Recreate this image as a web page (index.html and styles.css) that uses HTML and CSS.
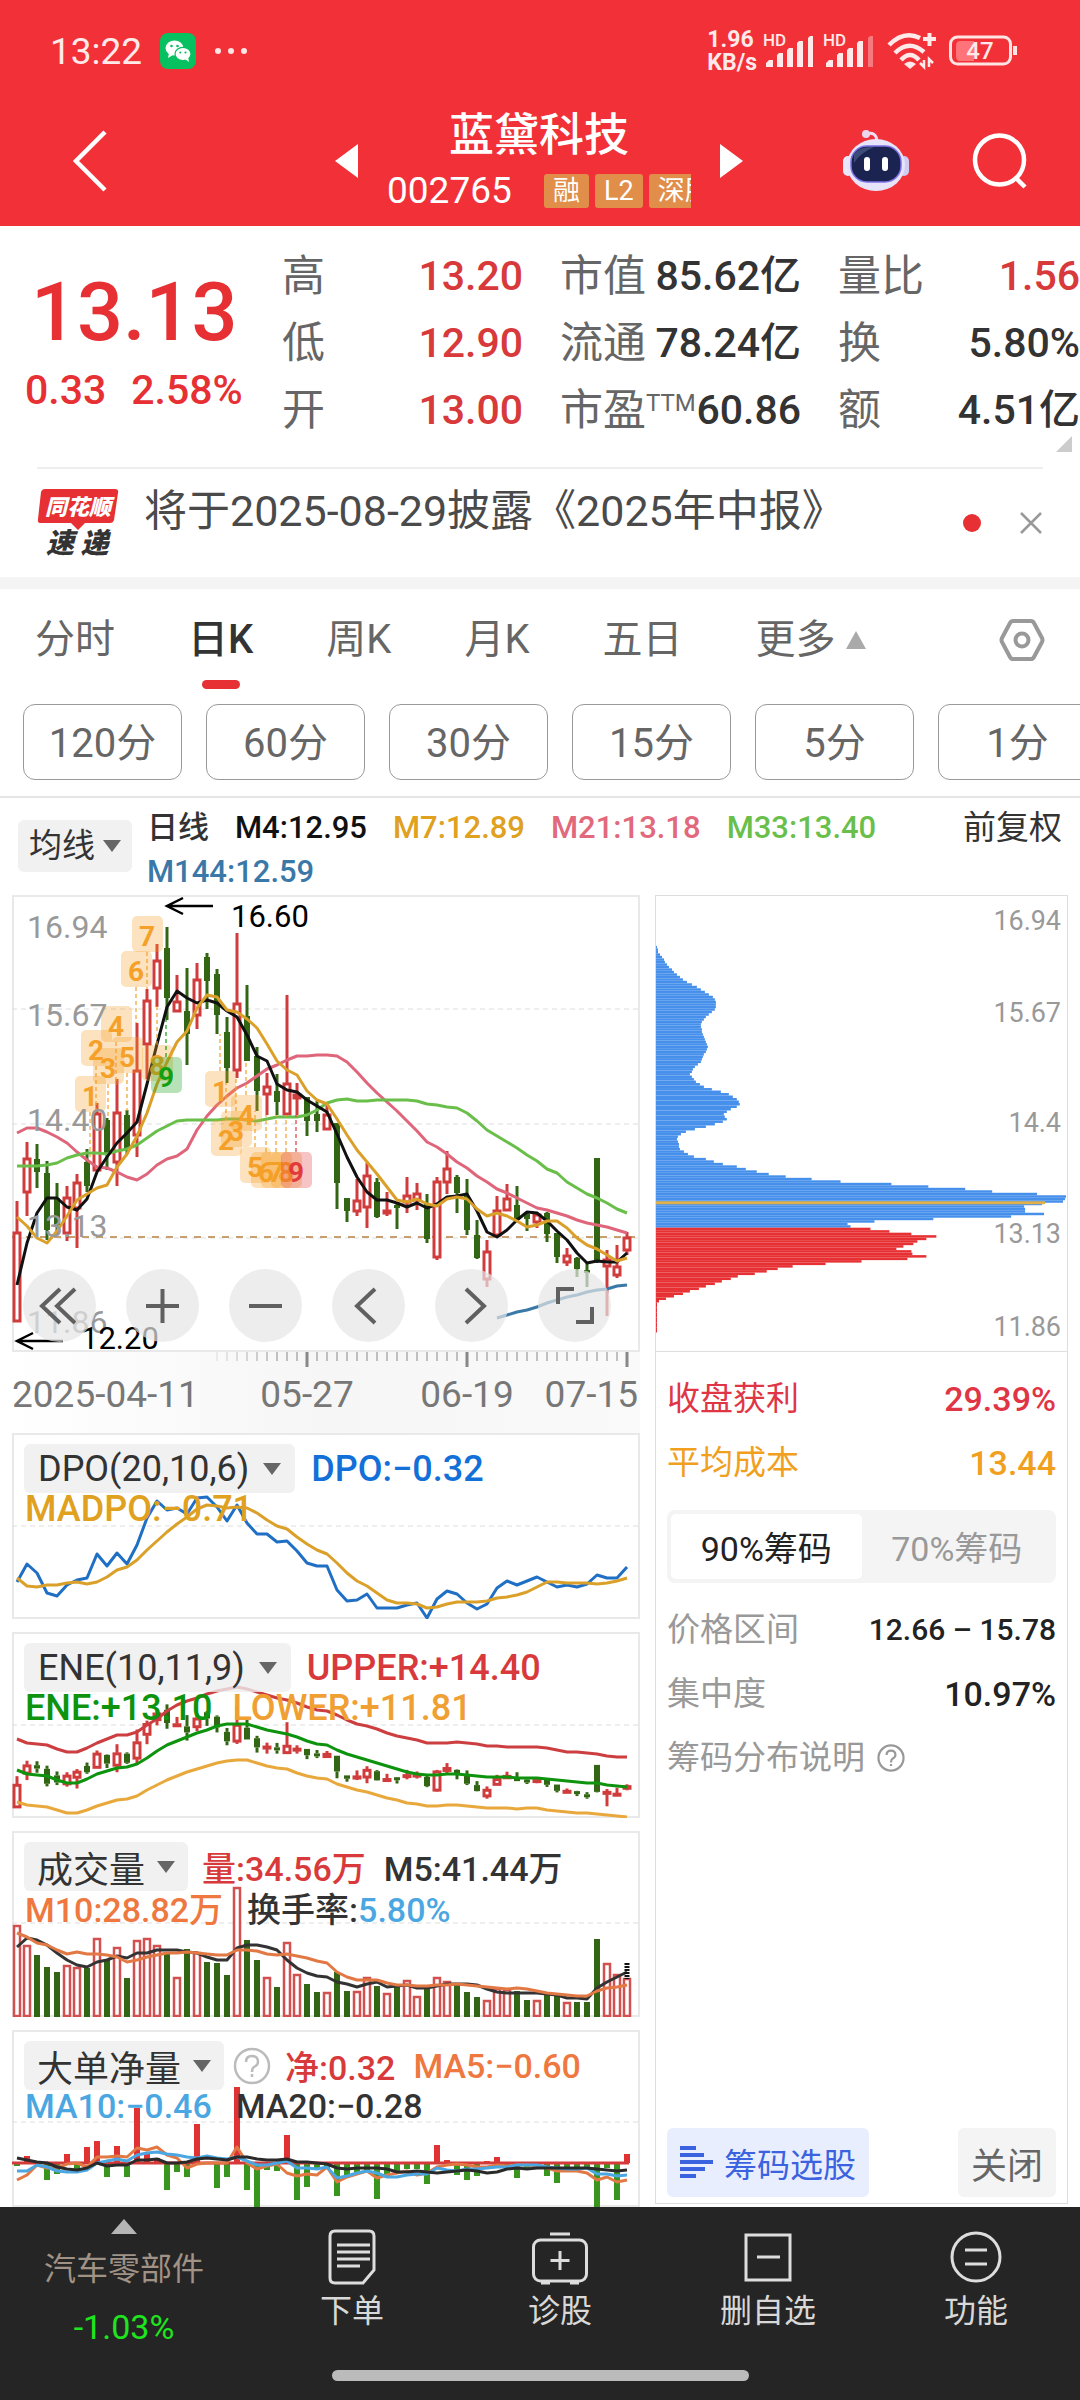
FILE: index.html
```html
<!DOCTYPE html>
<html lang="zh-CN">
<head>
    <meta charset="UTF-8">
    <meta name="viewport" content="width=device-width, initial-scale=1">
    <title>蓝黛科技 002765</title>
    <link rel="stylesheet" href="styles.css">
</head>
<body>
<header class="top">
    <div class="status">
        <span class="time">13:22</span>
        <svg class="wechat" width="36" height="36" viewBox="0 0 36 36">
            <rect width="36" height="36" rx="8" fill="#07c160"/>
            <ellipse cx="14.5" cy="15" rx="9" ry="7.5" fill="#fff"/>
            <path d="M9 20l-1 5 5-3z" fill="#fff"/>
            <ellipse cx="23" cy="21" rx="8" ry="6.6" fill="#fff" stroke="#07c160" stroke-width="1.2"/>
            <path d="M25 26l4 3-1-5z" fill="#fff"/>
            <g fill="#07c160"><circle cx="11.5" cy="13" r="1.3"/><circle cx="17.5" cy="13" r="1.3"/><circle cx="20.3" cy="19.5" r="1.1"/><circle cx="25.5" cy="19.5" r="1.1"/></g>
        </svg>
        <svg width="34" height="8" viewBox="0 0 34 8" fill="#ffe4e4"><circle cx="4" cy="4" r="3"/><circle cx="17" cy="4" r="3"/><circle cx="30" cy="4" r="3"/></svg>
        <div class="status-right">
            <span class="speed">1.96<br>KB/s</span>
            <svg width="112" height="36" viewBox="0 0 112 36" fill="#ffe9e9">
                <text x="0" y="13" class="hd">HD</text>
                <path d="M3 34v-4l3-3h4v7zM14 34V22l2-2h4v14zM24 34V17l2-2h4v19zM34 34V10l2-2h4v26zM45 34V5l2-2h3v31z"/>
                <text x="60" y="13" class="hd">HD</text>
                <path d="M63 34v-4l3-3h4v7zM74 34V22l2-2h4v14zM84 34V17l2-2h4v19zM94 34V10l2-2h4v26z"/>
                <path d="M105 34V5l2-2h3v31z" opacity=".4"/>
            </svg>
            <svg width="50" height="38" viewBox="0 0 50 38" fill="none" stroke="#ffe9e9" stroke-width="4.5">
                <path d="M2 13Q17 -2 33 6"/><path d="M8 21Q22 7 37 20"/><path d="M14 28Q23 18 32 28"/>
                <path d="M17 32l6 5 6-5q-6-5-12 0z" fill="#ffe9e9" stroke="none"/>
                <path d="M36 7h13M42.5 1v13" stroke-width="4"/>
                <path d="M37 28v7l-4-4M42 35v-8l4 4" stroke-width="2.5"/>
            </svg>
            <svg width="70" height="32" viewBox="0 0 70 32">
                <rect x="1.5" y="2" width="60" height="27" rx="7" fill="none" stroke="#ffe4e4" stroke-width="3"/>
                <path d="M11 6h14v20H11q-4 0-4-5V11q0-5 4-5z" fill="#ff7479"/>
                <path d="M66 11v9" stroke="#ffe4e4" stroke-width="4"/>
                <text x="31" y="24" class="battery">47</text>
            </svg>
        </div>
    </div>
    <div class="title-bar">
        <button class="icon-btn back" aria-label="返回"><svg width="36" height="62" viewBox="0 0 36 62" fill="none" stroke="#fff" stroke-width="4.5"><path d="M33 2L4 31l29 29"/></svg></button>
        <div class="stock-nav">
            <button class="icon-btn" aria-label="上一只"><svg width="24" height="34" viewBox="0 0 24 34"><path d="M24 0v34L1 17z" fill="#fff"/></svg></button>
            <div class="stock">
                <h1>蓝黛科技</h1>
                <div class="stock-code">
                    <span>002765</span>
                    <div class="tags"><b>融</b><b>L2</b><b>深股</b></div>
                </div>
            </div>
            <button class="icon-btn" aria-label="下一只"><svg width="24" height="34" viewBox="0 0 24 34"><path d="M0 0v34l23-17z" fill="#fff"/></svg></button>
        </div>
        <div class="tools">
            <button class="icon-btn" aria-label="助手">
                <svg width="68" height="64" viewBox="0 0 68 64">
                    <path d="M24 5q10-3 11 7" fill="none" stroke="#f4dff2" stroke-width="3"/>
                    <circle cx="24" cy="5" r="4" fill="#ecd6ee"/>
                    <rect x="1" y="27" width="10" height="20" rx="5" fill="#e9e8fb"/><rect x="57" y="27" width="10" height="20" rx="5" fill="#cfcdf5"/>
                    <ellipse cx="34" cy="36" rx="29" ry="26" fill="#e7e4fa"/>
                    <rect x="9" y="17" width="50" height="36" rx="16" fill="#1b2450" stroke="#7b6fe6" stroke-width="1.5"/>
                    <path d="M12 25q6-8 20-7-14 6-20 16z" fill="#3c4b78"/>
                    <rect x="22" y="28" width="6" height="14" rx="3" fill="#fff"/><rect x="40" y="28" width="6" height="14" rx="3" fill="#fff"/>
                </svg>
            </button>
            <button class="icon-btn" aria-label="搜索"><svg width="58" height="58" viewBox="0 0 58 58" fill="none" stroke="#fff" stroke-width="4.5"><circle cx="27.5" cy="28" r="24.5"/><path d="M44 46l9 9"/></svg></button>
        </div>
    </div>
</header>

<section class="quote">
    <div class="price">
        <strong>13.13</strong>
        <div><span>0.33</span><span>2.58%</span></div>
    </div>
    <dl class="stats">
        <div><dt>高</dt><dd class="up">13.20</dd></div>
        <div><dt>低</dt><dd class="up">12.90</dd></div>
        <div><dt>开</dt><dd class="up">13.00</dd></div>
    </dl>
    <dl class="stats">
        <div><dt>市值</dt><dd>85.62亿</dd></div>
        <div><dt>流通</dt><dd>78.24亿</dd></div>
        <div><dt>市盈<sup>TTM</sup></dt><dd>60.86</dd></div>
    </dl>
    <dl class="stats">
        <div><dt>量比</dt><dd class="up">1.56</dd></div>
        <div><dt>换</dt><dd>5.80%</dd></div>
        <div><dt>额</dt><dd>4.51亿</dd></div>
    </dl>
    <i class="corner"></i>
</section>

<section class="news">
    <svg class="news-logo" width="84" height="70" viewBox="0 0 84 70">
        <path d="M8 1h70q4 0 3 4l-4 27q-1 3-4 3H48l-7 7-7-7H4q-4 0-3-4L4 4q1-3 4-3z" fill="#e63033"/>
        <text x="8" y="27" class="logo-red">同花顺</text>
        <text x="9" y="65" class="logo-dark">速 递</text>
    </svg>
    <a href="#" class="news-text">将于2025-08-29披露《2025年中报》</a>
    <i class="dot"></i>
    <button class="icon-btn" aria-label="关闭公告"><svg width="24" height="24" viewBox="0 0 24 24" stroke="#999" stroke-width="2.5"><path d="M2 2l20 20M22 2L2 22"/></svg></button>
</section>

<nav class="tabs">
    <button>分时</button>
    <button class="active">日K</button>
    <button>周K</button>
    <button>月K</button>
    <button>五日</button>
    <button class="more">更多<svg width="20" height="18" viewBox="0 0 20 18"><path d="M10 0l10 18H0z" fill="#aaa"/></svg></button>
    <button class="setting" aria-label="设置"><svg width="46" height="44" viewBox="0 0 46 44" fill="none" stroke="#999" stroke-width="4"><path d="M14 3h18q2 0 3 2l8 15q1 2 0 4l-8 15q-1 2-3 2H14q-2 0-3-2L3 24q-1-2 0-4l8-15q1-2 3-2z"/><circle cx="23" cy="22" r="6.5"/></svg></button>
</nav>
<div class="periods">
    <button>120分</button>
    <button>60分</button>
    <button>30分</button>
    <button>15分</button>
    <button>5分</button>
    <button>1分</button>
</div>

<section class="legend">
    <button class="pick small">均线<i></i></button>
    <div class="legend-items">
        <span>日线</span>
        <span class="m4">M4:12.95</span>
        <span class="m7">M7:12.89</span>
        <span class="m21">M21:13.18</span>
        <span class="m33">M33:13.40</span>
        <span class="m144">M144:12.59</span>
    </div>
    <span class="adjust">前复权</span>
</section>

<main class="charts">
    <div class="left">
        <div class="panel">
            <svg id="kline" viewBox="0 0 628 457"></svg>
            <div class="controls">
                <button aria-label="最早"><svg viewBox="0 0 73 73"><path d="M37 20L19 37l18 17M52 20L34 37l18 17"/></svg></button>
                <button aria-label="放大"><svg viewBox="0 0 73 73"><path d="M20 37h33M36.5 20v34"/></svg></button>
                <button aria-label="缩小"><svg viewBox="0 0 73 73"><path d="M20 37h33"/></svg></button>
                <button aria-label="左移"><svg viewBox="0 0 73 73"><path d="M43 20L25 37l18 17"/></svg></button>
                <button aria-label="右移"><svg viewBox="0 0 73 73"><path d="M31 20l18 17-18 17"/></svg></button>
                <button aria-label="全屏"><svg viewBox="0 0 73 73"><path d="M20 35V20h16M54 38v15H38"/></svg></button>
            </div>
        </div>
        <svg id="ruler" viewBox="0 0 628 81"></svg>
        <div class="panel sub">
            <svg id="dpo" viewBox="0 0 628 186"></svg>
            <div class="sub-head">
                <div><button class="pick">DPO(20,10,6)<i></i></button><span class="blue">DPO:−0.32</span></div>
                <div><span class="gold">MADPO:−0.71</span></div>
            </div>
        </div>
        <div class="panel sub">
            <svg id="ene" viewBox="0 0 628 186"></svg>
            <div class="sub-head">
                <div><button class="pick">ENE(10,11,9)<i></i></button><span class="up">UPPER:+14.40</span></div>
                <div><span class="green">ENE:+13.10</span><span class="amber">LOWER:+11.81</span></div>
            </div>
        </div>
        <div class="panel sub">
            <svg id="volume" viewBox="0 0 628 186"></svg>
            <div class="sub-head compact">
                <div><button class="pick">成交量<i></i></button><span class="up">量:34.56万</span><span>M5:41.44万</span></div>
                <div><span class="orange">M10:28.82万</span><span>换手率:<em>5.80%</em></span></div>
            </div>
        </div>
        <div class="panel sub last">
            <svg id="net" viewBox="0 0 628 177"></svg>
            <div class="sub-head compact">
                <div><button class="pick">大单净量<i></i></button><svg class="help" viewBox="0 0 38 38"><circle cx="19" cy="19" r="17"/><path d="M13 15q0-6 6-6t6 6q0 3-4 5-2 1-2 5M19 27v3"/></svg><span class="up">净:0.32</span><span class="orange">MA5:−0.60</span></div>
                <div><span class="sky">MA10:−0.46</span><span>MA20:−0.28</span></div>
            </div>
        </div>
    </div>

    <aside class="chips">
        <svg id="chips" viewBox="0 0 412 457"></svg>
        <dl class="chip-info">
            <div class="profit"><dt>收盘获利</dt><dd>29.39%</dd></div>
            <div class="cost"><dt>平均成本</dt><dd>13.44</dd></div>
        </dl>
        <div class="toggle">
            <button class="on">90%筹码</button>
            <button>70%筹码</button>
        </div>
        <dl class="chip-info">
            <div><dt>价格区间</dt><dd class="range">12.66 – 15.78</dd></div>
            <div><dt>集中度</dt><dd>10.97%</dd></div>
            <div><dt>筹码分布说明<svg class="help" viewBox="0 0 38 38"><circle cx="19" cy="19" r="17"/><path d="M13 15q0-6 6-6t6 6q0 3-4 5-2 1-2 5M19 27v3"/></svg></dt></div>
        </dl>
        <div class="chip-actions">
            <button class="select"><svg width="34" height="34" viewBox="0 0 34 34" fill="#3b63e0"><path d="M0 0h16v4H0zM0 7h24v4H0zM0 14h33v4H0zM0 21h25v4H0zM0 28h16v4H0z"/></svg>筹码选股</button>
            <button class="close">关闭</button>
        </div>
    </aside>
</main>

<footer class="bottom">
    <div class="bottom-nav">
        <a href="#" class="sector">
            <svg width="26" height="15" viewBox="0 0 26 15"><path d="M13 0l13 15H0z" fill="#b5b5b5"/></svg>
            <span>汽车零部件</span>
            <b>-1.03%</b>
        </a>
        <button>
            <svg width="56" height="56" viewBox="0 0 56 56"><path d="M11 2h34q5 0 5 5v34L39 54H11q-5 0-5-5V7q0-5 5-5z"/><path d="M13 16h33M13 23h33M13 30h33M13 37h23"/></svg>
            下单
        </button>
        <button>
            <svg width="56" height="56" viewBox="0 0 56 56"><rect x="1.5" y="11" width="53" height="41" rx="7"/><path d="M18 5h20M28 22v19M18.5 31.5h19M9 54h9M38 54h9"/></svg>
            诊股
        </button>
        <button>
            <svg width="56" height="56" viewBox="0 0 56 56"><path d="M6 6h44v45H6zM17 28h23"/></svg>
            删自选
        </button>
        <button>
            <svg width="56" height="56" viewBox="0 0 56 56"><circle cx="28" cy="28" r="24"/><path d="M17 21h22M17 35h22"/></svg>
            功能
        </button>
    </div>
    <div class="home-bar"></div>
</footer>
<script src="script.js"></script>
</body>
</html>
```
FILE: styles.css
```css
* {
    box-sizing: border-box;
}
body {
    display: flex;
    flex-direction: column;
    min-height: 100vh;
    margin: 0;
    overflow-x: hidden;
    background-color: #fff;
    color: #333;
    font-family: Roboto, "Noto Sans CJK SC", sans-serif;
    font-size: 36px;
}
button {
    margin: 0;
    padding: 0;
    border: none;
    background: none;
    color: inherit;
    font: inherit;
    cursor: pointer;
}
a {
    color: inherit;
    text-decoration: none;
}
svg {
    display: block;
    flex: none;
}
dl, dd, h1 {
    margin: 0;
}

/* header */
.top {
    height: 226px;
    background-color: #f13038;
    color: #fff;
}
.status {
    display: flex;
    align-items: center;
    gap: 18px;
    height: 102px;
    padding: 0 61px 0 50px;
}
.time {
    color: #ffe9e9;
    font-size: 37px;
}
.status-right {
    display: flex;
    align-items: center;
    gap: 12px;
    margin-left: auto;
}
.speed {
    color: #ffe9e9;
    font-size: 23px;
    font-weight: 700;
    line-height: 23px;
    margin-right: -6px;
}
.hd {
    font-size: 17px;
    font-weight: 500;
}
.battery {
    fill: #ffe9e9;
    font-size: 24px;
    font-weight: 500;
    text-anchor: middle;
}
.title-bar {
    display: grid;
    grid-template-columns: 1fr 410px 1fr;
    align-items: center;
    height: 114px;
    padding: 0 50px 0 72px;
}
.icon-btn {
    display: flex;
}
.stock-nav {
    display: flex;
    align-items: center;
    justify-content: space-between;
    margin: 0 12px 0 -12px;
}
.stock {
    width: 304px;
    text-align: center;
}
.stock h1 {
    font-family: "Noto Sans CJK SC", sans-serif;
    font-size: 45px;
    font-weight: 500;
    line-height: 60px;
}
.stock-code {
    display: flex;
    align-items: center;
    justify-content: space-between;
    font-size: 37px;
    line-height: 58px;
}
.tags {
    display: flex;
    gap: 6px;
    width: 147px;
    overflow: hidden;
}
.tags b {
    flex: none;
    padding: 0 9px;
    border-radius: 3px;
    background-color: #e08e4a;
    font-size: 27px;
    font-weight: 400;
    line-height: 34px;
}
.tools {
    display: flex;
    align-items: center;
    justify-content: flex-end;
    gap: 62px;
}

/* quote */
.quote {
    position: relative;
    display: grid;
    grid-template-columns: 220px 241px 241px 1fr;
    column-gap: 37px;
    height: 241px;
    padding: 17px 0 0 25px;
    line-height: 67px;
}
.price {
    padding-top: 15px;
    color: #e63033;
    font-weight: 500;
    white-space: nowrap;
}
.price strong {
    display: block;
    padding-left: 6px;
    font-size: 81px;
    font-weight: 500;
    line-height: 110px;
}
.price div {
    display: flex;
    gap: 25px;
    font-size: 41px;
    line-height: 44px;
}
.stats div {
    display: flex;
    justify-content: space-between;
    white-space: nowrap;
}
.stats dt {
    color: #666;
    font-size: 43px;
}
.stats dd {
    font-size: 41px;
    font-weight: 500;
}
.stats sup {
    font-size: 24px;
    line-height: 0;
    vertical-align: 14px;
}
.up {
    color: #d8393b;
}
.corner {
    position: absolute;
    right: 8px;
    bottom: 15px;
    border: 8px solid transparent;
    border-right-color: #ccc;
    border-bottom-color: #ccc;
}

/* announcement */
.news {
    display: flex;
    align-items: center;
    height: 110px;
    margin: 0 37px;
    border-top: 2px solid #eee;
}
.logo-red, .logo-dark {
    font-family: "Noto Sans CJK SC", sans-serif;
    font-style: italic;
    font-weight: 900;
}
.logo-red {
    fill: #fff;
    font-size: 22px;
}
.logo-dark {
    fill: #333;
    font-size: 28px;
}
.news-text {
    flex: 1;
    padding: 0 0 24px 23px;
    color: #4a4a4a;
    font-size: 43px;
    line-height: 48px;
}
.dot {
    width: 18px;
    height: 18px;
    margin-right: 38px;
    border-radius: 50%;
    background-color: #e63033;
}

/* tabs */
.tabs {
    display: flex;
    align-items: center;
    height: 113px;
    padding: 0 35px;
    border-top: 12px solid #f4f4f4;
    color: #666;
    font-size: 40px;
    gap: 73px;
}
.tabs button {
    position: relative;
    line-height: 60px;
}
.tabs .active {
    color: #333;
    font-weight: 500;
}
.tabs .active::after {
    content: "";
    position: absolute;
    left: 50%;
    bottom: -19px;
    width: 38px;
    height: 9px;
    margin-left: -19px;
    border-radius: 5px;
    background-color: #e63033;
}
.tabs .more {
    display: flex;
    align-items: center;
    gap: 10px;
}
.tabs .setting {
    margin-left: auto;
}
.periods {
    display: flex;
    gap: 24px;
    height: 108px;
    padding: 14px 0 18px 23px;
    overflow: hidden;
    border-bottom: 2px solid #e6e6e6;
}
.periods button {
    flex: none;
    width: 159px;
    height: 76px;
    padding-bottom: 4px;
    border: 1px solid #999;
    border-radius: 12px;
    color: #666;
    font-size: 40px;
}

/* moving average legend */
.legend {
    display: flex;
    height: 97px;
    padding: 9px 18px 0;
    font-size: 32px;
    line-height: 42px;
}
.pick {
    display: flex;
    align-items: center;
    gap: 14px;
    height: 49px;
    padding: 0 14px;
    border-radius: 6px;
    background-color: rgba(238, 238, 238, 0.8);
    color: #333;
}
.pick i {
    border: 9px solid transparent;
    border-top: 12px solid #666;
    border-bottom: none;
}
.pick.small {
    gap: 8px;
    height: 52px;
    margin-top: 13px;
    padding: 0 11px;
    font-size: 33px;
}
.legend-items {
    display: flex;
    flex: 1;
    flex-wrap: wrap;
    column-gap: 26px;
    margin-left: 15px;
    font-size: 31px;
    font-weight: 500;
}
.m4 { color: #111; }
.m7 { color: #e0a020; }
.m21 { color: #e2687c; }
.m33 { color: #6abf4b; }
.m144 { color: #3a78a8; }
.adjust {
    font-size: 33px;
}

/* charts */
.charts {
    display: grid;
    grid-template-columns: 628fr 413fr;
    column-gap: 15px;
    flex: 1;
    padding: 0 12px;
}
.charts > * {
    min-width: 0;
}
.left > svg, .panel > svg, #chips {
    width: 100%;
    height: auto;
}
.panel {
    position: relative;
    box-shadow: inset 0 0 0 2px #e9e9e9;
}
.sub {
    margin-bottom: 13px;
}
.last {
    margin-bottom: 0;
}
.controls {
    position: absolute;
    left: 11px;
    bottom: 10px;
    display: flex;
    gap: 30px;
}
.controls button {
    width: 73px;
    height: 73px;
    border-radius: 50%;
    background-color: rgba(230, 230, 230, 0.7);
}
.controls path {
    fill: none;
    stroke: #606060;
    stroke-width: 4;
}
.sub-head {
    position: absolute;
    top: 11px;
    left: 12px;
    white-space: nowrap;
}
.sub-head div {
    display: flex;
    align-items: center;
    gap: 16px;
    height: 49px;
    font-weight: 500;
}
.sub-head div + div {
    gap: 20px;
    height: 32px;
    padding-left: 1px;
}
.sub-head .pick {
    font-weight: 400;
}
.sub-head em {
    color: #4ba7e2;
    font-style: normal;
}
.compact div {
    gap: 14px;
}
.compact span {
    font-size: 34px;
}
.compact span + span {
    margin-left: 4px;
}
.compact .pick {
    gap: 12px;
    padding: 0 13px;
}
.blue { color: #1270d8; }
.gold { color: #e0a020; }
.green { color: #0d930d; }
.amber { color: #f0a032; }
.orange { color: #ee7840; }
.sky { color: #4ba7e2; }
.help {
    width: 38px;
    height: 38px;
    fill: none;
    stroke: #bbb;
    stroke-width: 2.5;
}
.sub-head .help {
    margin-left: -5px;
}

/* chip distribution */
.chips {
    display: flex;
    flex-direction: column;
    margin-bottom: 3px;
    border: 1px solid #ddd;
    font-size: 33px;
}
.chip-info {
    padding: 15px 11px;
}
.chip-info div {
    display: flex;
    justify-content: space-between;
    line-height: 64px;
}
.chip-info dt {
    display: flex;
    align-items: center;
    gap: 12px;
    color: #999;
}
.chip-info dd {
    color: #222;
    font-size: 34px;
    font-weight: 500;
}
.chip-info .range {
    font-size: 30px;
}
.chip-info .help {
    width: 28px;
    height: 28px;
    stroke: #999;
    stroke-width: 3;
}
.chip-info .profit > * {
    color: #e03545;
}
.chip-info .cost > * {
    color: #f0a01e;
}
.toggle {
    display: flex;
    height: 73px;
    margin: 0 11px;
    padding: 4px;
    border-radius: 8px;
    background-color: #f4f4f4;
    color: #999;
    font-size: 34px;
}
.toggle button {
    flex: 1;
    border-radius: 5px;
}
.toggle .on {
    background-color: #fff;
    color: #222;
}
.chip-actions {
    display: flex;
    justify-content: space-between;
    height: 69px;
    margin: auto 11px 6px;
}
.chip-actions button {
    display: flex;
    align-items: center;
    gap: 10px;
    padding: 0 13px;
    border-radius: 6px;
}
.chip-actions .select {
    background-color: #e8eefe;
    color: #3b63e0;
}
.chip-actions .close {
    background-color: #f4f4f4;
    color: #666;
    font-size: 36px;
}

/* svg chart texts */
.axis {
    fill: #999;
    font-size: 32px;
}
.axis-right {
    fill: #999;
    font-size: 27px;
    text-anchor: end;
}
.peak {
    fill: #000;
    font-size: 31px;
}
.date {
    fill: #777;
    font-size: 37px;
}
.mark {
    font-size: 28px;
    font-weight: 700;
    text-anchor: middle;
}

/* bottom bar */
.bottom {
    height: 193px;
    background-color: #252525;
    color: #d8d8d8;
    font-size: 32px;
}
.bottom-nav {
    display: grid;
    grid-template-columns: 248px repeat(4, 1fr);
    height: 163px;
}
.bottom-nav > * {
    display: flex;
    flex-direction: column;
    align-items: center;
    justify-content: flex-start;
    padding-top: 22px;
    line-height: 48px;
}
.bottom-nav button svg {
    margin-bottom: 2px;
    fill: none;
    stroke: #ddd;
    stroke-width: 3;
}
.bottom-nav .sector {
    padding-top: 12px;
}
.sector span {
    margin-top: 11px;
    color: #a19286;
}
.sector b {
    margin-top: 10px;
    color: #1ee61e;
    font-size: 34px;
    font-weight: 400;
}
.home-bar {
    width: 417px;
    height: 11px;
    margin: 0 auto;
    border-radius: 6px;
    background-color: #bbb;
}
```
FILE: script.js
```js
const RED = '#d03c3c';
const GREEN = '#326614';

// [up, high, body top, body bottom, low]
const candles = [
    [1,306,337,427,427],[1,247,263,298,321],[0,249,264,277,293],[0,266,278,335,345],[0,288,303,330,340],
    [1,291,302,339,346],[1,279,287,314,353],[0,254,267,291,297],[1,208,218,276,276],[0,223,225,258,275],
    [1,184,217,268,291],[0,215,220,255,259],[1,128,175,241,262],[1,94,105,150,184],[1,49,65,94,112],
    [0,32,53,103,125],[1,80,106,117,117],[0,73,116,139,170],[1,68,84,121,134],[0,58,62,86,114],
    [0,74,79,120,139],[0,122,137,173,188],[1,38,108,176,183],[0,90,121,166,166],[0,152,161,196,216],
    [1,178,191,200,220],[0,179,196,207,220],[1,100,188,220,220],[1,188,199,204,220],[0,202,202,226,241],
    [0,206,219,226,237],[1,210,219,235,235],[0,228,228,288,314],[0,303,303,316,327],[1,284,305,317,321],
    [1,268,280,313,333],[0,283,287,322,323],[1,297,315,319,321],[0,309,310,313,334],[1,282,300,308,318],
    [1,288,298,306,315],[0,299,309,344,348],[1,282,286,363,365],[1,256,273,288,299],[0,280,282,298,318],
    [0,284,301,335,340],[0,325,340,363,364],[1,345,356,385,392],[1,301,315,341,341],[1,289,303,316,316],
    [0,291,310,325,325],[0,317,319,324,336],[1,318,319,328,333],[0,317,318,339,347],[0,338,338,362,368],
    [1,353,360,368,371],[0,362,363,374,382],[0,367,375,377,392],[0,263,263,366,368],[1,355,364,372,421],
    [1,350,371,381,383],[1,337,342,356,360]
];

const m4 = [390,348,318,303,303,312,315,304,277,262,248,238,227,189,149,112,96,103,108,105,108,116,122,140,161,166,189,195,197,205,211,217,239,262,282,297,305,305,308,312,308,313,309,302,301,299,316,337,342,335,325,317,318,326,336,345,358,368,366,367,367,358];
const m7 = [322,331,343,348,336,321,305,299,293,290,272,259,241,218,189,167,147,136,113,100,102,115,117,124,133,149,166,175,180,196,205,209,224,240,255,267,279,292,305,307,304,309,311,304,302,304,314,321,318,321,326,332,330,326,326,333,343,350,354,360,366,363];
const m21 = [238,233,233,237,242,248,257,265,272,273,277,282,285,279,270,264,261,254,235,221,210,201,193,188,181,174,170,165,161,161,160,160,161,167,177,188,198,207,216,226,236,247,252,259,267,273,281,287,294,298,303,308,313,315,318,321,325,328,330,332,335,338];
const m33 = [271,271,271,270,268,263,260,258,258,259,256,254,250,243,236,231,226,225,225,225,225,224,224,225,226,224,222,222,222,220,215,208,205,204,206,206,205,205,205,205,206,209,210,212,213,218,226,235,241,247,253,260,266,274,278,287,293,299,303,308,314,318];
const m144 = [423,420,417,415,412,408,405,402,400,397,395,394,391,390];

const dpo = [149,131,140,160,163,152,147,145,121,133,120,131,112,85,68,77,75,81,65,64,74,88,72,90,101,101,109,108,118,130,133,133,157,168,167,161,175,175,175,172,170,185,166,158,161,170,176,171,155,148,152,148,144,149,154,152,154,151,142,145,145,134];
const madpo = [145,153,154,152,152,150,149,151,149,144,137,134,127,117,108,99,91,84,76,72,73,75,74,75,80,87,93,96,104,111,117,121,130,140,148,153,160,167,170,170,171,175,174,171,169,169,169,168,165,164,162,159,154,149,149,150,150,150,151,150,148,145];

const upper = [107,111,112,113,117,120,120,116,111,107,103,103,100,93,87,79,73,69,66,62,59,57,55,57,60,63,66,68,71,75,78,79,83,88,92,94,97,101,104,106,108,111,111,111,110,111,112,114,114,115,115,115,115,116,118,120,120,121,122,124,125,125];
const ene = [138,142,143,144,148,151,151,147,142,139,136,135,132,126,119,113,109,105,101,98,94,92,92,92,95,98,100,102,105,109,112,113,118,122,125,128,131,134,137,140,142,143,143,142,142,143,144,145,145,145,146,146,146,147,148,149,150,151,151,153,154,155];
const lower = [170,173,174,175,178,181,181,178,174,171,168,167,164,158,153,148,144,140,137,134,131,129,128,128,131,134,136,137,141,144,146,147,152,155,158,160,163,166,168,171,172,174,174,173,173,174,175,176,176,176,177,176,176,178,179,180,181,181,182,183,184,185];

const volume = [92,72,62,50,45,52,50,49,79,57,70,39,77,79,72,65,40,68,65,55,54,42,130,77,57,40,30,75,43,33,25,25,45,26,26,40,31,24,30,37,21,29,40,36,32,25,20,17,29,28,26,17,17,24,24,15,15,15,78,54,43,39];
const vol5 = [116,107,109,114,122,129,134,136,131,129,125,127,122,122,119,119,119,121,122,126,129,129,117,114,114,116,119,129,137,142,145,146,151,153,156,153,151,156,155,154,157,157,155,153,153,153,154,158,161,162,162,162,162,163,164,167,167,168,157,151,146,141];
const vol10 = [102,106,112,114,119,123,121,123,123,124,126,131,129,126,124,122,122,121,122,123,124,124,119,119,120,123,124,123,125,127,130,132,141,146,149,149,149,152,154,154,155,155,154,154,153,154,155,156,157,158,157,158,160,162,163,164,165,165,160,157,156,154];

const net = [-3,7,-1,-17,-11,9,-10,16,22,-14,17,-14,55,9,5,-27,-9,-14,39,0,-25,-14,76,-27,-45,-7,-8,28,-37,-24,-6,-5,-33,-12,-10,-8,-36,-14,-8,-6,-6,-21,18,3,-12,-17,-13,2,6,-6,-15,-5,-5,-13,-20,-9,-5,-5,-50,-5,-37,9];
const net5 = [150,145,135,138,138,134,133,137,127,127,126,127,118,120,117,125,128,138,134,133,133,133,117,133,139,136,134,143,146,144,145,137,152,147,144,141,148,145,143,141,145,143,137,135,134,135,137,137,135,136,135,135,136,138,141,141,141,143,150,147,152,150];
const net10 = [141,141,135,137,141,142,142,140,133,131,129,131,125,123,122,124,125,127,128,126,128,129,127,131,135,135,133,131,138,138,139,137,148,146,143,141,143,147,147,145,144,144,138,140,141,139,139,138,137,137,135,135,135,137,138,139,139,138,144,144,146,145];
const net20 = [128,130,132,133,137,139,140,138,133,136,135,135,130,130,129,133,133,132,129,128,129,130,127,127,129,130,130,129,132,132,133,134,138,139,138,138,138,139,142,142,141,142,143,142,141,140,141,143,142,139,138,139,138,138,138,138,138,138,139,140,141,140];

// [text, x, y of the tag, stem end, color]
const marks = [
    [1,63,181,262,'#f5a028'],[2,69,135,215,'#f5a028'],[3,81,153,222,'#f5a028'],[4,89,111,190,'#f5a028'],
    [5,100,142,216,'#f5a028'],[6,109,56,128,'#f5a028'],[7,120,21,94,'#f5a028'],[8,130,150,110,'#f5a028'],
    [9,139,162,125,'#12a012'],[1,193,176,139,'#f5a028'],[2,199,225,188,'#f5a028'],[3,209,216,183,'#f5a028'],
    [4,219,200,166,'#f5a028'],[5,228,252,216,'#f5a028'],[6,239,257,220,'#f5a028'],[7,249,257,220,'#f5a028'],
    [8,259,257,220,'#f5a028'],[9,269,257,220,'#e23a3a']
];

// [y, width] of the chip distribution
const chips = [
    [50,1],[55,2],[61,7],[68,11],[75,18],[81,25],[86,33],[91,43],[96,51],[101,58],[106,60],[111,60],[116,55],
    [123,47],[128,45],[138,47],[146,50],[151,52],[158,48],[166,44],[171,38],[178,34],[185,40],[190,48],[194,60],
    [196,70],[201,79],[206,84],[209,83],[213,74],[218,67],[223,71],[226,65],[230,50],[233,37],[236,26],[241,21],
    [253,24],[257,31],[260,38],[262,48],[265,58],[268,69],[270,81],[273,92],[275,101],[278,115],[280,130],
    [282,150],[285,185],[287,229],[290,273],[292,305],[295,337],[297,376],[300,411],[305,408],[307,390],
    [310,369],[315,370],[317,396],[320,356],[322,290],[325,219],[327,191],[330,195],[332,210],[334,228],
    [337,246],[339,285],[342,274],[344,263],[347,259],[349,255],[352,235],[354,258],[357,251],[359,275],
    [362,263],[364,220],[367,178],[369,144],[372,124],[374,114],[377,104],[379,85],[382,77],[384,69],[387,61],
    [389,53],[392,45],[394,36],[397,29],[399,21],[402,12],[404,4],[408,1],[436,1]
];

const x = i => 5 + i * 10;
const draw = (id, parts) => {
    document.getElementById(id).innerHTML = parts.join('');
};
const line = (values, color, start = 0) => {
    const points = values.map((y, i) => `${x(i + start)},${y}`).join(' ');
    return `<polyline points="${points}" fill="none" stroke="${color}" stroke-width="3" stroke-linejoin="round"/>`;
};
const dash = (y, color = '#ddd', pattern = '5 4', width = 1) =>
    `<path d="M0 ${y}H628" stroke="${color}" stroke-width="${width}" stroke-dasharray="${pattern}"/>`;

const drawCandles = (map) => candles.map(([up, high, top, bottom, low], i) => {
    const color = up ? RED : GREEN;
    const y1 = map(top);
    const h = Math.max(map(bottom) - y1, 3);
    let svg = '';
    if (map(high) < y1) {
        svg += `<path d="M${x(i)} ${map(high)}V${y1}" stroke="${color}" stroke-width="3"/>`;
    }
    if (map(low) > y1 + h) {
        svg += `<path d="M${x(i)} ${y1 + h}V${map(low)}" stroke="${color}" stroke-width="3"/>`;
    }
    if (up) {
        svg += `<rect x="${x(i) - 3}" y="${y1 + 1}" width="6" height="${Math.max(h - 2, 1)}" fill="#fff" stroke="${color}" stroke-width="3"/>`;
    } else {
        svg += `<rect x="${x(i) - 3}" y="${y1}" width="6" height="${h}" fill="${color}"/>`;
    }
    return svg;
});

const drawMarks = () => marks.map(([text, left, top, end, color]) => {
    const cx = left + 15;
    const from = end > top ? top + 36 : top;
    return `<path d="M${cx} ${from}V${end}" stroke="${color}" stroke-width="2" stroke-dasharray="4 3" opacity=".6"/>
        <rect x="${left}" y="${top}" width="31" height="36" rx="5" fill="${color}" opacity=".3"/>
        <text x="${cx}" y="${top + 30}" class="mark" fill="${color}">${text}</text>`;
});

draw('kline', [
    dash(114), dash(229), dash(343),
    dash(342, '#c8a070', '7 7', 2),
    ...drawCandles(y => y),
    line(m21, '#df667a'), line(m33, '#6abf4b'), line(m4, '#111'), line(m7, '#dba02a'), line(m144, '#3a78a8', 48),
    ...drawMarks(),
    '<text x="15" y="43" class="axis">16.94</text>',
    '<text x="15" y="131" class="axis">15.67</text>',
    '<text x="15" y="236" class="axis">14.40</text>',
    '<text x="15" y="342" class="axis">13.13</text>',
    '<text x="15" y="438" class="axis">11.86</text>',
    '<path d="M201 11H155M171 3l-16 8 16 8" fill="none" stroke="#000" stroke-width="2.5"/>',
    '<text x="219" y="32" class="peak">16.60</text>',
    '<path d="M51 446H5M21 438l-16 8 16 8" fill="none" stroke="#000" stroke-width="2.5"/>',
    '<text x="69" y="454" class="peak">12.20</text>'
]);

const ticks = candles.map((c, i) => {
    if (i < 20) return '';
    const major = i === 29 || i === 45 || i === 61;
    return `<path d="M${x(i)} 0v${major ? 15 : 9}" stroke="#888" stroke-width="${major ? 3 : 1}" opacity="${Math.min((i - 18) / 8, 1)}"/>`;
});
draw('ruler', [
    '<defs><linearGradient id="fade"><stop offset="0" stop-color="#fff"/><stop offset=".5" stop-color="#f6f6f6"/><stop offset="1" stop-color="#fafafa"/></linearGradient></defs>',
    '<rect width="628" height="81" fill="url(#fade)"/>',
    ...ticks,
    '<text x="0" y="55" class="date">2025-04-11</text>',
    '<text x="295" y="55" class="date" text-anchor="middle">05-27</text>',
    '<text x="455" y="55" class="date" text-anchor="middle">06-19</text>',
    '<text x="626" y="55" class="date" text-anchor="end">07-15</text>'
]);

draw('dpo', [dash(93), line(dpo, '#1f6fc4'), line(madpo, '#dba02a')]);

draw('ene', [
    dash(93),
    ...drawCandles(y => 64 + y * 0.262),
    line(upper, '#cc3e40'), line(ene, '#0d930d'), line(lower, '#e8a83c')
]);

draw('volume', [
    dash(92),
    ...volume.map((h, i) => candles[i][0]
        ? `<rect x="${x(i) - 3}" y="${187 - h}" width="6" height="${h - 2}" fill="#fff" stroke="#d25050" stroke-width="2.5"/>`
        : `<rect x="${x(i) - 3}" y="${186 - h}" width="6" height="${h}" fill="${GREEN}"/>`),
    line(vol5, '#333'), line(vol10, '#e27844'),
    '<path d="M615 132v16" stroke="#111" stroke-width="5" stroke-dasharray="2 1"/>'
]);

draw('net', [
    dash(92),
    ...net.map((v, i) => `<rect x="${x(i) - 3}" y="${v > 0 ? 133 - v : 133}" width="6" height="${Math.abs(v)}" fill="${v > 0 ? '#e03232' : '#38961f'}"/>`),
    '<path d="M0 133H617" stroke="#d43a3a" stroke-width="3"/>',
    line(net5, '#e27844'), line(net10, '#4ba7e2'), line(net20, '#2a2a2a')
]);

const chipWidth = (y) => {
    const n = chips.findIndex(c => c[0] >= y);
    if (n < 1) return chips[0][1];
    const [y0, w0] = chips[n - 1];
    const [y1, w1] = chips[n];
    return w0 + (w1 - w0) * (y - y0) / (y1 - y0);
};
const rows = [];
for (let y = 50; y < 436; y += 2.5) {
    rows.push(`<rect y="${y}" width="${Math.round(chipWidth(y))}" height="2.5" fill="${y < 332 ? '#4690ec' : '#e63033'}"/>`);
}
draw('chips', [
    ...rows,
    '<path d="M0 307.5H390" stroke="#e0b04a" stroke-width="3"/>',
    '<text x="406" y="34" class="axis-right">16.94</text>',
    '<text x="406" y="126" class="axis-right">15.67</text>',
    '<text x="406" y="237" class="axis-right">14.4</text>',
    '<text x="406" y="348" class="axis-right">13.13</text>',
    '<text x="406" y="441" class="axis-right">11.86</text>',
    '<path d="M0 456.5H412" stroke="#ddd"/>'
]);
```
